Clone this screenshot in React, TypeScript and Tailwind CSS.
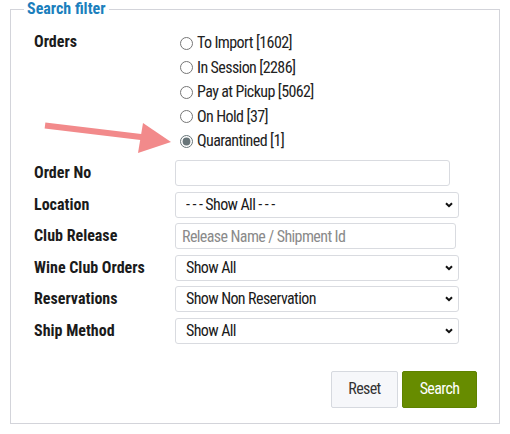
import React from "react";

const radios = [
  { label: "To Import [1602]", checked: false },
  { label: "In Session [2286]", checked: false },
  { label: "Pay at Pickup [5062]", checked: false },
  { label: "On Hold [37]", checked: false },
  { label: "Quarantined [1]", checked: true },
];

function Chevron() {
  return (
    <svg
      className="pointer-events-none absolute right-[6px] top-1/2 -translate-y-1/2"
      width="8"
      height="6"
      viewBox="0 0 8 6"
    >
      <path d="M1 1.2 L4 4.2 L7 1.2" fill="none" stroke="#111" strokeWidth="2" />
    </svg>
  );
}

function Select({ value, width }: { value: string; width: string }) {
  return (
    <div className={`relative h-[26px] ${width}`}>
      <select
        defaultValue={value}
        className="h-full w-full appearance-none rounded-[3px] border border-[#d9dbe0] bg-white pl-[10px] text-[16px] leading-[20px] tracking-[-0.6px] text-[#1a1a1a] outline-none"
      >
        <option>{value}</option>
      </select>
      <Chevron />
    </div>
  );
}

export default function App() {
  const label = "text-[16px] leading-[20px] font-bold text-[#1b1b1b]";
  return (
    <div className="relative h-[434px] w-[510px] bg-white font-['Liberation_Sans_Narrow','Roboto_Condensed','Arial_Narrow',sans-serif]">
      <fieldset className="ml-[10px] w-[490px] border border-[#d3d4da] p-0">
        <legend className="ml-[13px] px-[3px] text-[16px] leading-[18px] font-bold text-[#1c7fbd]">
          Search filter
        </legend>
        <div className="grid grid-cols-[141px_1fr] items-center gap-y-[5.5px] pl-[23px] pr-[22px] pb-[15.5px] pt-[13px]">
          <div className={`${label} mt-[1px] self-start`}>Orders</div>
          <div className="flex flex-col pb-[1px]">
            {radios.map((r) => (
              <label
                key={r.label}
                className="flex h-[24.5px] items-center text-[16px] leading-[18px] tracking-[-0.6px] text-[#222]"
              >
                <input
                  type="radio"
                  name="orders"
                  defaultChecked={r.checked}
                  className="ml-[5px] mr-[4px] h-[13px] w-[13px] accent-[#687579]"
                />
                <span>{r.label}</span>
              </label>
            ))}
          </div>

          <div className={label}>Order No</div>
          <input
            type="text"
            className="h-[26px] w-[275px] rounded-[3px] border border-[#d9dbe0] bg-white px-[6px] text-[16px] outline-none"
          />

          <div className={label}>Location</div>
          <Select value="- - - Show All - - -" width="w-[284px]" />

          <div className={label}>Club Release</div>
          <input
            type="text"
            placeholder="Release Name / Shipment Id"
            className="h-[26px] w-[281px] rounded-[3px] border border-[#d9dbe0] bg-white px-[6px] text-[16px] tracking-[-0.6px] text-[#222] outline-none placeholder:text-[#8a8a8a]"
          />

          <div className={label}>Wine Club Orders</div>
          <Select value="Show All" width="w-[284px]" />

          <div className={label}>Reservations</div>
          <Select value="Show Non Reservation" width="w-[284px]" />

          <div className={label}>Ship Method</div>
          <Select value="Show All" width="w-[284px]" />

          <div className="col-span-2 mt-[21.5px] flex justify-end gap-[4px]">
            <button className="h-[37px] w-[67px] rounded-[2px] border border-[#d6d9df] bg-[#f6f7fa] text-[16px] tracking-[-0.6px] text-[#333]">
              Reset
            </button>
            <button className="h-[37px] w-[75px] rounded-[2px] border border-[#5e8200] bg-[#678c00] text-[16px] tracking-[-0.6px] text-white">
              Search
            </button>
          </div>
        </div>
      </fieldset>

      <svg
        className="pointer-events-none absolute left-0 top-0"
        width="510"
        height="434"
        viewBox="0 0 510 434"
      >
        <line x1="45" y1="125.5" x2="145" y2="137.5" stroke="#f28a8b" strokeWidth="6" />
        <polygon points="143,123 171,142 138,153" fill="#f28a8b" />
      </svg>
    </div>
  );
}
